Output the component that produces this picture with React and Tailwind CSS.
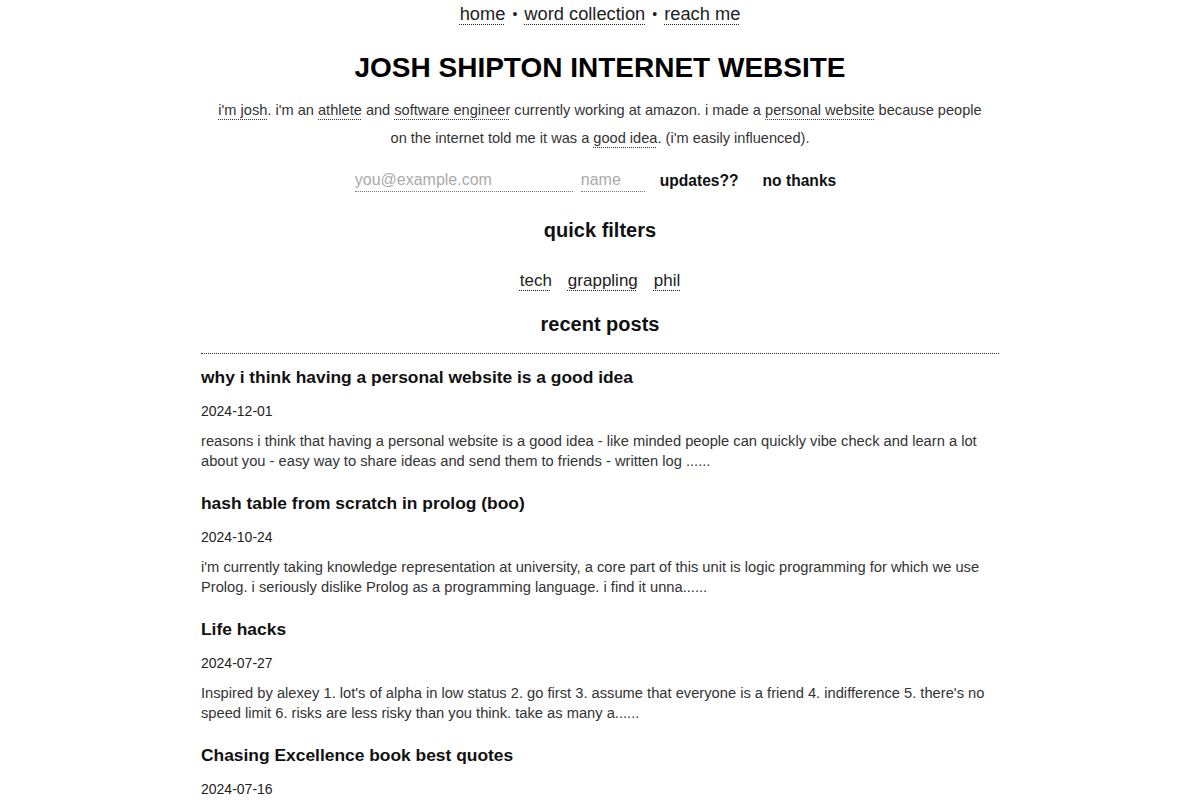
import React from 'react';

const posts = [
  {
    title: 'why i think having a personal website is a good idea',
    date: '2024-12-01',
    excerpt:
      'reasons i think that having a personal website is a good idea - like minded people can quickly vibe check and learn a lot about you - easy way to share ideas and send them to friends - written log ......',
  },
  {
    title: 'hash table from scratch in prolog (boo)',
    date: '2024-10-24',
    excerpt:
      "i'm currently taking knowledge representation at university, a core part of this unit is logic programming for which we use Prolog. i seriously dislike Prolog as a programming language. i find it unna......",
  },
  {
    title: 'Life hacks',
    date: '2024-07-27',
    excerpt:
      "Inspired by alexey 1. lot's of alpha in low status 2. go first 3. assume that everyone is a friend 4. indifference 5. there's no speed limit 6. risks are less risky than you think. take as many a......",
  },
  {
    title: 'Chasing Excellence book best quotes',
    date: '2024-07-16',
    excerpt:
      'favourite lines from the book, collected while reading ......',
  },
];

const dotted = 'underline decoration-dotted decoration-1 underline-offset-4';

const A = ({ children, className = '' }) => (
  <a href="#" className={`${dotted} ${className}`}>{children}</a>
);

export default function App() {
  return (
    <div className="min-h-screen bg-white text-[#111] font-['Liberation_Sans',sans-serif]">
      <div className="mx-auto w-[798px] flex flex-col items-center">
        <nav className="pt-[2px] text-[18.3px] leading-[24px] text-[#222] flex items-center gap-[7px]">
          <A>home</A>
          <span className="text-[14px]">•</span>
          <A>word collection</A>
          <span className="text-[14px]">•</span>
          <A>reach me</A>
        </nav>

        <h1 className="mt-[24px] text-[28px] leading-[36px] font-bold text-black">
          JOSH SHIPTON INTERNET WEBSITE
        </h1>

        <p className="mt-[10px] text-center text-[14.6px] leading-[28px] text-[#333] px-[16px]">
          <A>i'm josh</A>. i'm an <A>athlete</A> and <A>software engineer</A> currently working at amazon. i made a{' '}
          <A>personal website</A> because people on the internet told me it was a <A>good idea</A>. (i'm easily
          influenced).
        </p>

        <form className="mt-[17px] mr-[9px] flex items-center" onSubmit={e => e.preventDefault()}>
          <input
            placeholder="you@example.com"
            className="w-[218px] text-[16px] leading-[20px] pb-[1px] border-b border-dotted border-[#777] outline-none placeholder:text-[#aaa]"
          />
          <input
            placeholder="name"
            className="ml-[8px] w-[64px] text-[16px] leading-[20px] pb-[1px] border-b border-dotted border-[#777] outline-none placeholder:text-[#aaa]"
          />
          <button className="ml-[15px] text-[15.6px] font-bold text-[#111]">updates??</button>
          <button type="button" className="ml-[24px] text-[15.6px] font-bold text-[#111]">no thanks</button>
        </form>

        <h2 className="mt-[25px] text-[20px] leading-[26px] font-bold text-[#111]">quick filters</h2>

        <div className="mt-[27px] flex gap-[16px] text-[17px] leading-[22px] text-[#222]">
          <A>tech</A>
          <A>grappling</A>
          <A>phil</A>
        </div>

        <h2 className="mt-[19px] text-[20px] leading-[26px] font-bold text-[#111]">recent posts</h2>

        <div className="mt-[16px] w-full border-t border-dotted border-[#333]">
          {posts.map(p => (
            <article key={p.date} className="pt-[11px] pb-[9px]">
              <h3 className="text-[17.4px] leading-[24px] font-bold text-[#111]">{p.title}</h3>
              <div className="mt-[12px] text-[14px] leading-[20px] text-[#222]">{p.date}</div>
              <p className="mt-[10px] text-[14.7px] leading-[20px] text-[#333]">{p.excerpt}</p>
            </article>
          ))}
        </div>
      </div>
    </div>
  );
}
